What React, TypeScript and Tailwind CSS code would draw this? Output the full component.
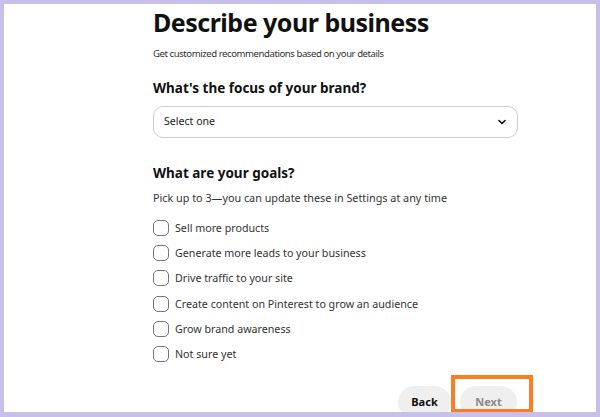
import { ChevronDown } from "lucide-react";

const goals = [
  "Sell more products",
  "Generate more leads to your business",
  "Drive traffic to your site",
  "Create content on Pinterest to grow an audience",
  "Grow brand awareness",
  "Not sure yet",
];

export default function App() {
  return (
    <div
      className="h-[417px] w-[600px] bg-[#c8c0e8] pt-[4px] pl-[4px] pr-[4px] pb-[5px]"
      style={{ fontFamily: '"Noto Sans", "Open Sans", sans-serif' }}
    >
      <div className="relative h-full w-full overflow-hidden bg-white">
        <div className="ml-[149px] flex w-[365px] flex-col text-[#111111]">
          <h1 className="h-[36px] text-[25px] font-bold leading-[36px] tracking-[-0.5px]">
            Describe your business
          </h1>
          <p className="mt-[6px] h-[16px] text-[9.6px] leading-[16px] tracking-[-0.45px] text-[#333333]">
            Get customized recommendations based on your details
          </p>
          <h2 className="mt-[16px] h-[20px] text-[13.5px] font-bold leading-[20px]">
            What's the focus of your brand?
          </h2>
          <div className="mt-[8px] flex h-[32px] items-center justify-between rounded-[10px] border border-[#cdcdcd] pl-[10px] pr-[9px]">
            <span className="text-[10.6px] text-[#222222]">Select one</span>
            <ChevronDown size={12} strokeWidth={3.2} className="text-[#111111]" />
          </div>
          <h2 className="mt-[25px] h-[20px] text-[13.5px] font-bold leading-[20px]">
            What are your goals?
          </h2>
          <p className="mt-[7px] h-[16px] text-[10.8px] leading-[16px] text-[#333333]">
            Pick up to 3—you can update these in Settings at any time
          </p>
          <ul className="mt-[9px] flex flex-col">
            {goals.map((g) => (
              <li key={g} className="flex h-[25.3px] items-center gap-[6px]">
                <span className="h-[16px] w-[16px] shrink-0 rounded-[5px] border-[1.5px] border-[#767676]" />
                <span className="text-[10.7px] text-[#333333]">{g}</span>
              </li>
            ))}
          </ul>
          <div className="mt-[19px] flex justify-end gap-[9px] pr-[1px]">
            <button className="h-[32px] w-[53px] rounded-full bg-[#efefef] text-[11px] font-bold text-[#111111]">
              Back
            </button>
            <button className="h-[32px] w-[57px] rounded-full bg-[#efefef] text-[11px] font-bold text-[#8a8a8a]">
              Next
            </button>
          </div>
        </div>
        <div className="absolute left-[447px] top-[371px] h-[38px] w-[82px] border-[4px] border-[#fb7d24]" />
      </div>
    </div>
  );
}
